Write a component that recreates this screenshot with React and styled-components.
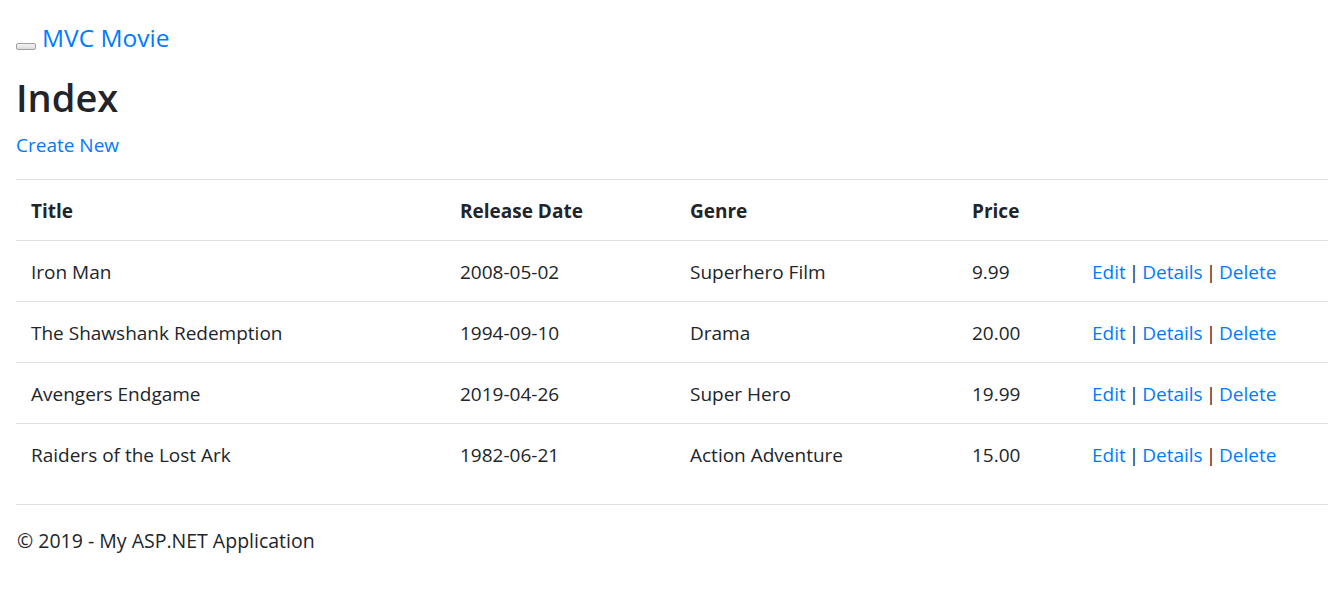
import styled, { createGlobalStyle } from "styled-components"

const GlobalStyle = createGlobalStyle`
  html, body {
    margin: 0;
    padding: 0;
    background: #fff;
  }
  body {
    font-family: "Open Sans", "Noto Sans", sans-serif;
    font-size: 19px;
    line-height: 30px;
    color: #212529;
  }
`;

const Page = styled.div`
  padding: 0 0 0 16px;
`;

const Navbar = styled.nav`
  display: flex;
  align-items: flex-end;
  padding-top: 23px;
`;

const Toggler = styled.button`
  width: 20px;
  height: 7px;
  padding: 0;
  margin: 0 6px 3px 0;
  border: 1px solid #a0a0a0;
  border-radius: 2px;
  background: linear-gradient(#f4f4f4, #dcdcdc);
`;

const Brand = styled.a`
  font-size: 24.5px;
  line-height: 30px;
  color: #007bff;
  text-decoration: none;
`;

const Heading = styled.h1`
  margin: 18px 0 0;
  font-size: 38px;
  line-height: 52px;
  font-weight: 600;
`;

const Link = styled.a`
  color: #007bff;
  text-decoration: none;
`;

const Actions = styled.p`
  margin: 7px 0 19px;
`;

const Table = styled.table`
  width: 1312px;
  border-collapse: collapse;
  margin-bottom: 20px;
`;

const Th = styled.th`
  width: ${(p) => p.w || "auto"};
  text-align: left;
  font-weight: 700;
  padding: 16px 15px 14px;
  border-top: 1px solid #dee2e6;
`;

const Td = styled.td`
  padding: 16px 15px 14px;
  border-top: 1px solid #dee2e6;
`;

const ActionLinks = styled.span`
  display: inline-flex;
  gap: 3px;
`;

const Footer = styled.footer`
  border-top: 1px solid #dee2e6;
  padding: 21px 0 0 1px;
  font-size: 19.5px;
`;

const movies = [
  { title: "Iron Man", date: "2008-05-02", genre: "Superhero Film", price: "9.99" },
  { title: "The Shawshank Redemption", date: "1994-09-10", genre: "Drama", price: "20.00" },
  { title: "Avengers Endgame", date: "2019-04-26", genre: "Super Hero", price: "19.99" },
  { title: "Raiders of the Lost Ark", date: "1982-06-21", genre: "Action Adventure", price: "15.00" },
];

const App = () => {
  return (
    <Page>
      <GlobalStyle />
      <Navbar>
        <Toggler aria-label="Toggle navigation" />
        <Brand href="#">MVC Movie</Brand>
      </Navbar>
      <Heading>Index</Heading>
      <Actions>
        <Link href="#">Create New</Link>
      </Actions>
      <Table>
        <thead>
          <tr>
            <Th w="399px">Title</Th>
            <Th w="200px">Release Date</Th>
            <Th w="252px">Genre</Th>
            <Th w="90px">Price</Th>
            <Th></Th>
          </tr>
        </thead>
        <tbody>
          {movies.map((m) => (
            <tr key={m.title}>
              <Td>{m.title}</Td>
              <Td>{m.date}</Td>
              <Td>{m.genre}</Td>
              <Td>{m.price}</Td>
              <Td>
                <ActionLinks>
                  <Link href="#">Edit</Link>|<Link href="#">Details</Link>|
                  <Link href="#">Delete</Link>
                </ActionLinks>
              </Td>
            </tr>
          ))}
        </tbody>
      </Table>
      <Footer>&copy; 2019 - My ASP.NET Application</Footer>
    </Page>
  )
}

export default App
